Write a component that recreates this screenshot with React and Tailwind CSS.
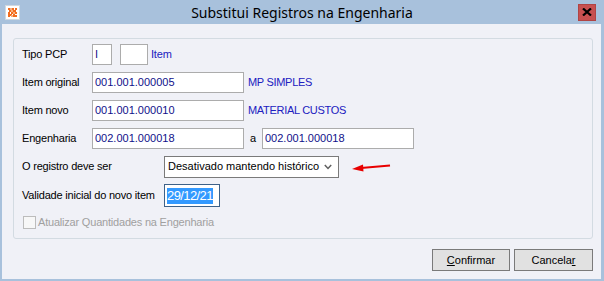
import React from "react";

const font = { fontFamily: '"Liberation Sans", Arial, sans-serif' };

function AppIcon() {
  return (
    <svg width="15" height="15" viewBox="0 0 15 15">
      <rect x="0.5" y="0.5" width="14" height="14" fill="#ffffff" stroke="#d0d8e0" />
      <g fill="#f26d21">
        <rect x="3" y="3" width="2" height="2" />
        <rect x="7" y="3" width="2" height="2" />
        <rect x="10" y="3" width="2" height="2" />
        <rect x="4" y="5" width="2" height="2" />
        <rect x="8" y="5" width="3" height="2" />
        <rect x="3" y="7" width="2" height="2" />
        <rect x="6" y="7" width="2" height="2" />
        <rect x="10" y="7" width="2" height="2" />
        <rect x="3" y="9" width="2" height="3" />
        <rect x="5" y="9" width="2" height="2" />
        <rect x="8" y="9" width="2" height="3" />
        <rect x="10" y="10" width="2" height="2" />
      </g>
      <g fill="#fbb07d">
        <rect x="5" y="3" width="2" height="2" />
        <rect x="6" y="5" width="2" height="2" />
        <rect x="8" y="7" width="2" height="2" />
        <rect x="6" y="10" width="2" height="2" />
      </g>
    </svg>
  );
}

function Input({ w, children, className = "" }) {
  return (
    <div
      className={`h-[21px] bg-white border border-[#acacac] flex items-center pl-[2px] text-[11px] text-[#10108a] ${className}`}
      style={{ width: w }}
    >
      {children}
    </div>
  );
}

function Label({ w, children }) {
  return (
    <div className="text-[11px] tracking-[-0.2px] text-black shrink-0" style={{ width: w }}>
      {children}
    </div>
  );
}

export default function App() {
  return (
    <div className="w-[604px] h-[281px] bg-[#a8c1dc] flex flex-col overflow-hidden" style={font}>
      {/* Title bar */}
      <div className="h-[24px] flex items-center shrink-0">
        <div className="w-[26px] pl-[5px] flex items-center">
          <AppIcon />
        </div>
        <div
          className="flex-1 text-center text-[14px] text-black"
          style={{ fontFamily: '"Noto Sans", "Open Sans", sans-serif' }}
        >
          Substitui Registros na Engenharia
        </div>
        <div className="w-[26px] flex justify-start">
          <div className="w-[18px] h-[17px] bg-[#c75050] border border-[#b04444] flex items-center justify-center">
            <svg width="10" height="8" viewBox="0 0 10 8">
              <path d="M1 0.5 L9 7.5 M9 0.5 L1 7.5" stroke="#000" strokeWidth="2.2" />
            </svg>
          </div>
        </div>
      </div>

      {/* Body */}
      <div className="flex-1 ml-[2px] mr-[3px] mb-[2px] bg-[#f0f1f7] flex flex-col pt-[14px] pl-[11px] pr-[8px]">
        <div className="h-[201px] border border-[#d3dbe2] rounded-[3px] pt-[5px] pl-[8px] flex flex-col gap-[7px]">
          {/* Tipo PCP */}
          <div className="flex items-center h-[21px]">
            <Label w={70}>Tipo PCP</Label>
            <Input w={20}>I</Input>
            <Input w={28} className="ml-[8px]" />
            <span className="ml-[3px] text-[11px] tracking-[-0.2px] text-[#2020c0]">Item</span>
          </div>
          {/* Item original */}
          <div className="flex items-center h-[21px]">
            <Label w={70}>Item original</Label>
            <Input w={152}>001.001.000005</Input>
            <span className="ml-[4px] text-[11px] tracking-[-0.3px] text-[#2020c0]">MP SIMPLES</span>
          </div>
          {/* Item novo */}
          <div className="flex items-center h-[21px]">
            <Label w={70}>Item novo</Label>
            <Input w={152}>001.001.000010</Input>
            <span className="ml-[4px] text-[11px] tracking-[-0.3px] text-[#2020c0]">MATERIAL CUSTOS</span>
          </div>
          {/* Engenharia */}
          <div className="flex items-center h-[21px]">
            <Label w={70}>Engenharia</Label>
            <Input w={152}>002.001.000018</Input>
            <span className="ml-[6px] w-[12px] text-[11px] text-black">a</span>
            <Input w={152}>002.001.000018</Input>
          </div>
          {/* O registro deve ser */}
          <div className="flex items-center h-[21px]">
            <Label w={142}>O registro deve ser</Label>
            <div className="w-[175px] h-[22px] bg-white border border-[#7a7a7a] flex items-center pl-[3px] pr-[6px] text-[11px] text-black">
              <span className="flex-1">Desativado mantendo histórico</span>
              <svg width="8" height="6" viewBox="0 0 8 6">
                <path d="M0.8 1 L4 4.5 L7.2 1" stroke="#606060" strokeWidth="1.5" fill="none" />
              </svg>
            </div>
            <svg width="40" height="10" viewBox="0 0 40 10" className="ml-[12px]">
              <path d="M10 6 L39 3.5" stroke="#e80000" strokeWidth="2" />
              <path d="M1 7 L12 2.5 L12.5 9.5 Z" fill="#e80000" />
            </svg>
          </div>
          {/* Validade */}
          <div className="flex items-center h-[23px]">
            <Label w={142}>Validade inicial do novo item</Label>
            <div className="w-[56px] h-[23px] bg-white border border-[#3d6189] flex items-center pl-[2px]">
              <span className="bg-[#3399ff] text-white text-[13px] leading-[16px] tracking-[-0.6px]">
                29/12/21
              </span>
            </div>
          </div>
          {/* Checkbox */}
          <div className="flex items-center h-[14px] mt-[1px] pl-[1px]">
            <div className="w-[13px] h-[13px] border border-[#bcbcbc] bg-[#f7f7f7]" />
            <span className="ml-[2px] text-[11px] tracking-[-0.2px] text-[#a0a0a0]">Atualizar Quantidades na Engenharia</span>
          </div>
        </div>

        {/* Buttons */}
        <div className="flex justify-end gap-[4px] mt-[10px]">
          <div className="w-[78px] h-[22px] bg-[#e1e1e1] border border-[#7a7a7a] flex items-center justify-center text-[11px] text-black">
            <span><span className="underline">C</span>onfirmar</span>
          </div>
          <div className="w-[79px] h-[22px] bg-[#e1e1e1] border border-[#7a7a7a] flex items-center justify-center text-[11px] text-black">
            <span>Cancela<span className="underline">r</span></span>
          </div>
        </div>
      </div>
    </div>
  );
}
